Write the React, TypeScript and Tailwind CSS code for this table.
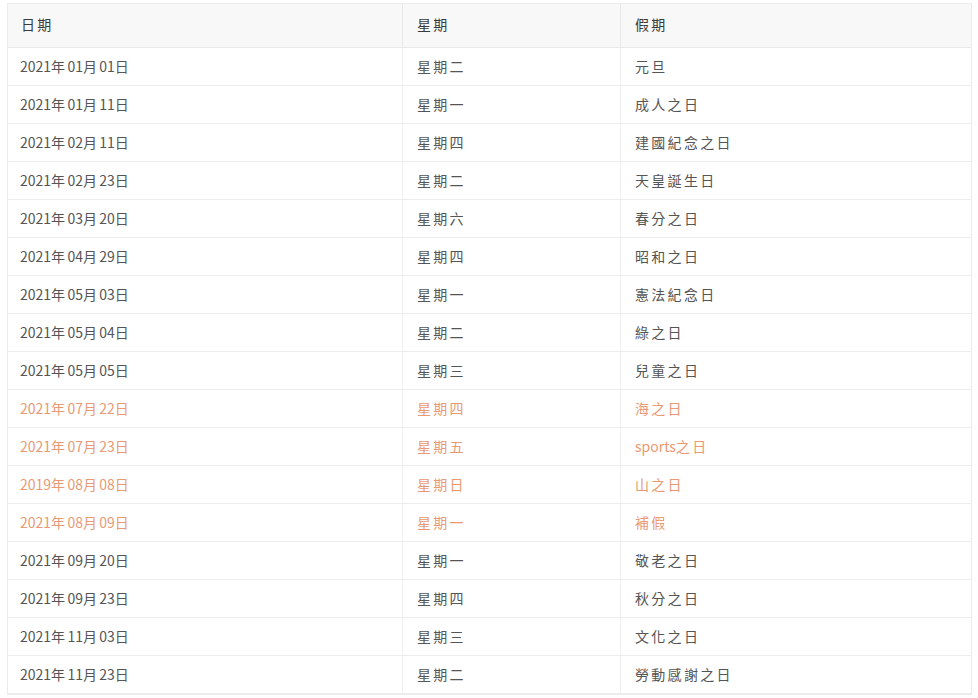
import React from "react";

const rows: [string, string, string, boolean][] = [
  ["2021年01月01日", "星期二", "元旦", false],
  ["2021年01月11日", "星期一", "成人之日", false],
  ["2021年02月11日", "星期四", "建國紀念之日", false],
  ["2021年02月23日", "星期二", "天皇誕生日", false],
  ["2021年03月20日", "星期六", "春分之日", false],
  ["2021年04月29日", "星期四", "昭和之日", false],
  ["2021年05月03日", "星期一", "憲法紀念日", false],
  ["2021年05月04日", "星期二", "綠之日", false],
  ["2021年05月05日", "星期三", "兒童之日", false],
  ["2021年07月22日", "星期四", "海之日", true],
  ["2021年07月23日", "星期五", "sports之日", true],
  ["2019年08月08日", "星期日", "山之日", true],
  ["2021年08月09日", "星期一", "補假", true],
  ["2021年09月20日", "星期一", "敬老之日", false],
  ["2021年09月23日", "星期四", "秋分之日", false],
  ["2021年11月03日", "星期三", "文化之日", false],
  ["2021年11月23日", "星期二", "勞動感謝之日", false],
];

function T({ s }: { s: string }) {
  const parts = s.match(/[\u3000-\u9fff]+|[^\u3000-\u9fff]+/g) || [];
  return (
    <span>
      {parts.map((p, i) =>
        /[\u3000-\u9fff]/.test(p) ? (
          <span key={i} className="tracking-[2.3px]">
            {p}
          </span>
        ) : (
          <span key={i}>{p}</span>
        )
      )}
    </span>
  );
}

export default function App() {
  return (
    <div
      className="w-[978px] h-[698px] bg-white pt-[3px] pl-[7px] pr-[6px] overflow-hidden"
      style={{ fontFamily: '"Noto Sans CJK TC", "Noto Sans", sans-serif' }}
    >
      <div className="border border-[#ececec] text-[14px]">
        <div className="grid grid-cols-[395px_218px_1fr] h-[44px] bg-[#f8f8f8] border-b border-[#e8e8e8] text-[#3a3a3a]">
          <div className="flex items-center pl-[13px] pb-[3px] border-r border-[#e8e8e8]"><T s="日期" /></div>
          <div className="flex items-center pl-[14px] pb-[3px] border-r border-[#e8e8e8]"><T s="星期" /></div>
          <div className="flex items-center pl-[14px] pb-[3px]"><T s="假期" /></div>
        </div>
        {rows.map(([d, w, h, hl], i) => (
          <div
            key={i}
            className={
              "grid grid-cols-[395px_218px_1fr] h-[38px] border-b border-[#ececec] " +
              (hl ? "text-[#e99a74]" : "text-[#555555]")
            }
          >
            <div className="flex items-center pl-[12px] border-r border-[#f0f0f0]"><T s={d} /></div>
            <div className="flex items-center pl-[14px] border-r border-[#f0f0f0]"><T s={w} /></div>
            <div className="flex items-center pl-[14px]"><T s={h} /></div>
          </div>
        ))}
      </div>
    </div>
  );
}
